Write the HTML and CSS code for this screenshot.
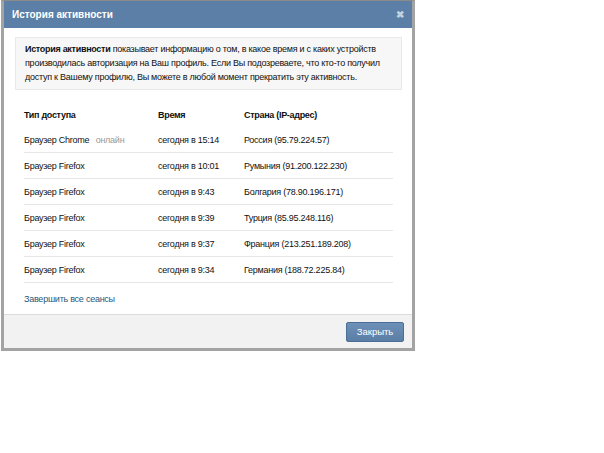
FILE: index.html
```html
<!DOCTYPE html>
<html lang="ru">
<head>
    <meta charset="UTF-8">
    <meta name="viewport" content="width=device-width, initial-scale=1.0">
    <title>История активности</title>
    <link rel="stylesheet" href="styles.css">
</head>
<body>
    <div class="box">
        <div class="boxTitle">
            <span>История активности</span>
            <span class="boxClose">&#10006;</span>
        </div>
        <div class="boxBody">
            <div class="info">
                <b>История активности</b> показывает информацию о том, в какое время и с каких устройств<br>
                производилась авторизация на Ваш профиль. Если Вы подозреваете, что кто-то получил<br>
                доступ к Вашему профилю, Вы можете в любой момент прекратить эту активность.
            </div>
            <table class="sessions">
                <tr class="head">
                    <td class="type">Тип доступа</td>
                    <td class="time">Время</td>
                    <td>Страна (IP-адрес)</td>
                </tr>
                <tr>
                    <td>Браузер Chrome <span class="online">онлайн</span></td>
                    <td>сегодня в 15:14</td>
                    <td>Россия (95.79.224.57)</td>
                </tr>
                <tr>
                    <td>Браузер Firefox</td>
                    <td>сегодня в 10:01</td>
                    <td>Румыния (91.200.122.230)</td>
                </tr>
                <tr>
                    <td>Браузер Firefox</td>
                    <td>сегодня в 9:43</td>
                    <td>Болгария (78.90.196.171)</td>
                </tr>
                <tr>
                    <td>Браузер Firefox</td>
                    <td>сегодня в 9:39</td>
                    <td>Турция (85.95.248.116)</td>
                </tr>
                <tr>
                    <td>Браузер Firefox</td>
                    <td>сегодня в 9:37</td>
                    <td>Франция (213.251.189.208)</td>
                </tr>
                <tr>
                    <td>Браузер Firefox</td>
                    <td>сегодня в 9:34</td>
                    <td>Германия (188.72.225.84)</td>
                </tr>
            </table>
            <a href="#" class="endAll">Завершить все сеансы</a>
        </div>
        <div class="boxFooter">
            <button class="closeBtn">Закрыть</button>
        </div>
    </div>
</body>
</html>
```

FILE: styles.css
```css
body{
    margin: 0;
    background-color: #fff;
    font-family: 'Liberation Sans', Arial, sans-serif;
    font-size: 9px;
    color: #000;
}
.box{
    width: 408px;
    margin-left: 1px;
    border: 3px solid #a3a3a3;
    border-top: 1px solid #8a8a8a;
    background-color: #fff;
}
.boxTitle{
    height: 27px;
    background-color: #5b7fa6;
    color: #fff;
    font-weight: bold;
    font-size: 10px;
    display: flex;
    align-items: center;
    justify-content: space-between;
    padding: 0 8px 0 8px;
}
.boxClose{
    color: #c3d2e2;
    font-size: 10px;
}
.boxBody{
    padding: 9px 10px 0 11px;
    height: 277px;
}
.info{
    background-color: #f7f7f7;
    border: 1px solid #e8e9ec;
    padding: 4px 8px 5px 9px;
    line-height: 14px;
    font-size: 9px;
    letter-spacing: -0.25px;
    color: #111;
}
.info b{
    letter-spacing: -0.3px;
}
.sessions{
    border-collapse: collapse;
    margin: 12px 0 0 9px;
    width: 369px;
}
.sessions td{
    padding: 0;
    height: 25px;
    border-bottom: 1px solid #e6e6e6;
    color: #111;
    letter-spacing: -0.25px;
}
.sessions .head td{
    font-weight: bold;
    border-bottom: none;
    height: 25px;
    letter-spacing: -0.3px;
}
.sessions .type{
    width: 134px;
}
.sessions .time{
    width: 86px;
}
.online{
    color: #999;
    margin-left: 4px;
}
.endAll{
    display: inline-block;
    margin: 11px 0 0 9px;
    color: #2b587a;
    text-decoration: none;
    letter-spacing: -0.25px;
}
.boxFooter{
    height: 33px;
    background-color: #f2f2f2;
    border-top: 1px solid #dcdcdc;
    display: flex;
    align-items: center;
    justify-content: flex-end;
    padding-right: 8px;
}
.closeBtn{
    width: 58px;
    height: 20px;
    border: 1px solid #4a6e96;
    border-radius: 2px;
    background: linear-gradient(#6d90b7, #5a7ea6);
    color: #fff;
    font-family: 'Liberation Sans', Arial, sans-serif;
    font-size: 9.5px;
    cursor: pointer;
}
```
